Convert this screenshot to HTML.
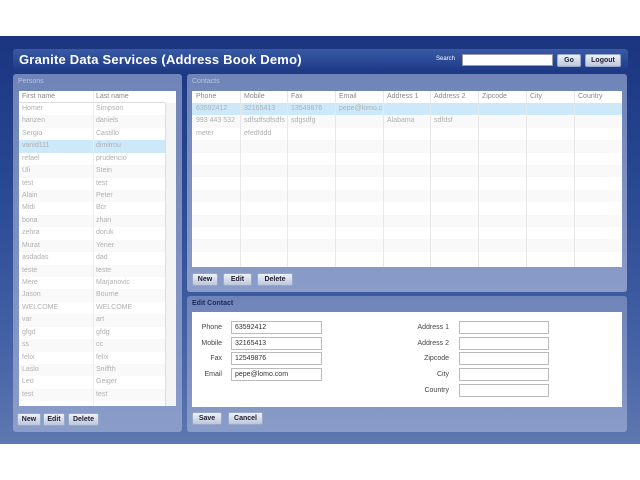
<!DOCTYPE html>
<html><head><meta charset="utf-8"><style>
*{margin:0;padding:0;box-sizing:border-box}
body{width:640px;height:480px;background:#fff;position:relative;overflow:hidden;font-family:"Liberation Sans","DejaVu Sans",sans-serif;font-size:7px}
.a{position:absolute}
#bg{left:0;top:36px;width:640px;height:408px;background:linear-gradient(#1b3580,#2a4a94 40%,#4a65a8 80%,#5e78b0)}
#title{left:13px;top:49px;width:615px;height:21px;border-radius:3px;background:linear-gradient(#3a5aa6,#1e3b88)}
#title b{position:absolute;left:6px;top:3px;color:#fff;font-size:13px;letter-spacing:.2px}
.panel{border-radius:3px;background:linear-gradient(#6f84b8,#8a9cc8)}
.pt{position:absolute;left:5px;top:4px;color:#b8c6e4;font-size:7px}
.tbl{background:#fff}
.btn{position:absolute;height:13px;border-radius:2px;background:linear-gradient(#eef1f7,#bcc7dc);border:1px solid #98a8c8;color:#223;font-size:7px;font-weight:bold;text-align:center;line-height:11px}
.row{position:absolute;left:0;height:12.4px;color:#b0b0b0;font-size:7px;line-height:12px}
.row span{position:absolute;left:3px}
.hd{color:#888}
.inp{position:absolute;height:13px;border:1px solid #bbb;background:#fff;font-size:7px;line-height:11px;padding-left:3px;color:#333}
.lbl{position:absolute;font-size:7px;color:#444;text-align:right}
</style></head><body>
<div id="bg" class="a"></div>
<div id="title" class="a"><b>Granite Data Services (Address Book Demo)</b>
<span class="a" style="left:423px;top:7px;color:#fff;font-size:6px">Search</span>
<div class="a" style="left:449px;top:5px;width:91px;height:12px;background:#fff;border:1px solid #99a"></div>
<div class="btn" style="left:544px;top:5px;width:24px">Go</div>
<div class="btn" style="left:572px;top:5px;width:36px">Logout</div>
</div>

<div class="a panel" style="left:13px;top:74px;width:169px;height:358px">
<span class="pt">Persons</span>
<div class="a tbl" style="left:6px;top:17px;width:157px;height:315px" id="pers"></div>
<div class="btn" style="left:4px;top:339px;width:24px">New</div>
<div class="btn" style="left:30px;top:339px;width:22px">Edit</div>
<div class="btn" style="left:55px;top:339px;width:31px">Delete</div>
</div>

<div class="a panel" style="left:187px;top:74px;width:440px;height:218px">
<span class="pt">Contacts</span>
<div class="a tbl" style="left:5px;top:17px;width:430px;height:176px" id="cont"></div>
<div class="btn" style="left:5px;top:199px;width:26px">New</div>
<div class="btn" style="left:36px;top:199px;width:29px">Edit</div>
<div class="btn" style="left:70px;top:199px;width:36px">Delete</div>
</div>

<div class="a panel" style="left:187px;top:296px;width:440px;height:136px">
<span class="pt" style="color:#1a2a55;font-weight:bold;top:4px">Edit Contact</span>
<div class="a tbl" style="left:5px;top:16px;width:430px;height:95px"></div>
<div class="lbl" style="left:5px;top:28px;width:30px">Phone</div>
<div class="lbl" style="left:5px;top:44px;width:30px">Mobile</div>
<div class="lbl" style="left:5px;top:59px;width:30px">Fax</div>
<div class="lbl" style="left:5px;top:75px;width:30px">Email</div>
<div class="inp" style="left:44px;top:25px;width:91px">63592412</div>
<div class="inp" style="left:44px;top:41px;width:91px">32165413</div>
<div class="inp" style="left:44px;top:56px;width:91px">12549876</div>
<div class="inp" style="left:44px;top:72px;width:91px">pepe@lomo.com</div>
<div class="lbl" style="left:212px;top:28px;width:50px">Address 1</div>
<div class="lbl" style="left:212px;top:44px;width:50px">Address 2</div>
<div class="lbl" style="left:212px;top:59px;width:50px">Zipcode</div>
<div class="lbl" style="left:212px;top:75px;width:50px">City</div>
<div class="lbl" style="left:212px;top:91px;width:50px">Country</div>
<div class="inp" style="left:272px;top:25px;width:90px"></div>
<div class="inp" style="left:272px;top:41px;width:90px"></div>
<div class="inp" style="left:272px;top:56px;width:90px"></div>
<div class="inp" style="left:272px;top:72px;width:90px"></div>
<div class="inp" style="left:272px;top:88px;width:90px"></div>
<div class="btn" style="left:5px;top:116px;width:30px">Save</div>
<div class="btn" style="left:41px;top:116px;width:35px">Cancel</div>
</div>

<script>
var p=[["First name","Last name"],["Homer","Simpson"],["hanzen","daniels"],["Sergio","Castillo"],["vanid111","dimitrou"],["refael","prudencio"],["Uli","Stein"],["test","test"],["Alain","Peter"],["Midi","Bcr"],["bona","zhan"],["zehra","doruk"],["Murat","Yener"],["asdadas","dad"],["teste","teste"],["Mere","Marjanovic"],["Jason","Bourne"],["WELCOME","WELCOME"],["var","art"],["gfgd","gfdg"],["ss","cc"],["felix","felix"],["Laslo","Sniffth"],["Leo","Geiger"],["test","test"]];
var h='';
for(var i=0;i<p.length;i++){var y=i==0?0:12+(i-1)*12.43;
var bg=i==0?'#fff':(i==4?'#cde8f8':(i%2?'#fff':'#f9f9f9'));
h+='<div class="row'+(i==0?' hd':'')+'" style="top:'+y+'px;width:146px;background:'+bg+';border-bottom:'+(i==0?'1px solid #ddd':'0')+'"><span>'+p[i][0]+'</span><span style="left:77px">'+p[i][1]+'</span></div>';}
h+='<div class="a" style="left:74px;top:0;width:1px;height:315px;background:#eee"></div>';
h+='<div class="a" style="left:146px;top:12px;width:11px;height:303px;background:#f4f4f4;border-left:1px solid #ddd"></div>';
document.getElementById('pers').innerHTML=h;
var c=["Phone","Mobile","Fax","Email","Address 1","Address 2","Zipcode","City","Country"],cx=[0,48,95,143,191,238,286,334,382];
var r=[["63592412","32165413","13549876","pepe@lomo.c"],["993 443 532","sdfsdfsdfsdfs","sdgsdfg","","Alabama","sdfdsf"],["meter","efedfddd"]];
h='';
for(var i=0;i<14;i++){var y=i==0?0:12+(i-1)*12.4;var bg=i==0?'#fff':(i==1?'#cde8f8':(i%2?'#fff':'#f9f9f9'));
h+='<div class="row'+(i==0?' hd':'')+'" style="top:'+y+'px;width:430px;background:'+bg+'">';
var d=i==0?c:(r[i-1]||[]);
for(var j=0;j<d.length;j++)h+='<span style="left:'+(cx[j]+4)+'px">'+d[j]+'</span>';
h+='</div>';}
for(var j=1;j<9;j++)h+='<div class="a" style="left:'+cx[j]+'px;top:0;width:1px;height:176px;background:#e8e8e8"></div>';
document.getElementById('cont').innerHTML=h;
</script>
</body></html>
